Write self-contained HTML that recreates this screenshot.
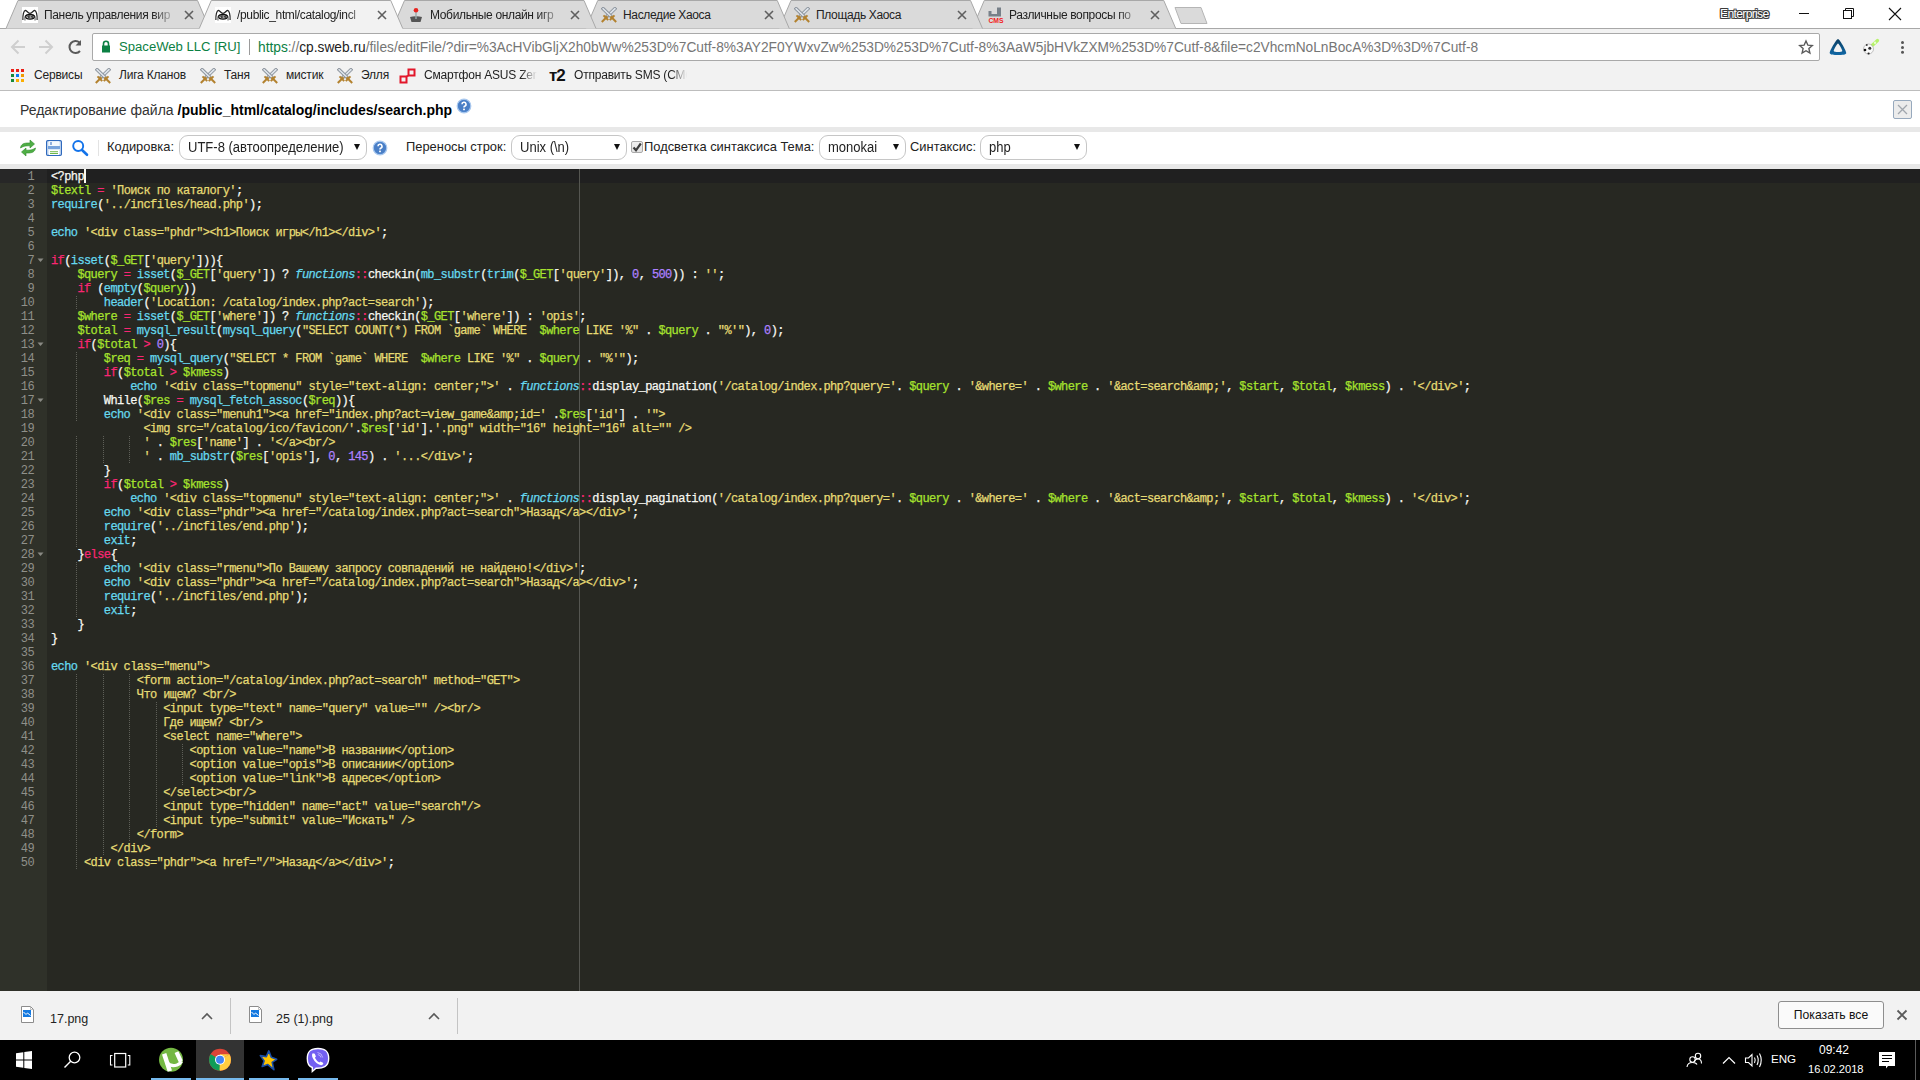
<!DOCTYPE html>
<html><head><meta charset="utf-8">
<style>
*{margin:0;padding:0;box-sizing:border-box}
html,body{width:1920px;height:1080px;overflow:hidden;background:#fff;font-family:"Liberation Sans",sans-serif}
.abs{position:absolute}
/* chrome */
#frame{position:absolute;left:0;top:0;width:1920px;height:28px;background:#fff}
.tabt{position:absolute;top:0;font-size:12px;letter-spacing:-0.35px;color:#222;white-space:nowrap;overflow:hidden}
#toolbar{position:absolute;left:0;top:29px;width:1920px;height:61px;background:#f2f2f2}
#bmline{position:absolute;left:0;top:90px;width:1920px;height:1px;background:#bdbdbd}
#omni{position:absolute;left:92px;top:33px;width:1728px;height:28px;background:#fff;border:1px solid #a9a9a9;border-radius:2px}
.url{position:absolute;top:39px;font-size:13.74px;white-space:nowrap}
.bm{position:absolute;top:68px;font-size:12px;letter-spacing:-0.2px;color:#222;white-space:nowrap}
/* page */
#page{position:absolute;left:0;top:91px;width:1920px;height:899px;background:#fff}
.band{position:absolute;left:0;width:1920px;background:#e8e8e8}
.lbl{position:absolute;font-size:12.9px;line-height:17px;color:#222;white-space:nowrap}
.sel{position:absolute;height:25px;border:1px solid #c6c6c6;border-radius:9px;background:#fff;font-size:13px;color:#222;padding-left:8px;line-height:23px;white-space:nowrap}
.st{display:inline-block;font-size:14px;transform:scaleX(0.93);transform-origin:0 50%}
.sel b{position:absolute;right:6px;top:8px;width:0;height:0;border-left:3px solid transparent;border-right:3px solid transparent;border-top:6px solid #111}
/* editor */
#editor{position:absolute;left:0;top:169px;width:1920px;height:822px;background:#272822;overflow:hidden}
#gutter{position:absolute;left:0;top:0;width:47px;height:822px;background:#2f3129}
#nums{position:absolute;left:0;top:1px;width:34px;text-align:right;font-family:"Liberation Mono",monospace;font-size:12px;letter-spacing:-0.6px;line-height:14px;color:#8f908a}
#code{position:absolute;left:51px;top:1px;-webkit-text-stroke:0.25px;font-family:"Liberation Mono",monospace;font-size:12px;letter-spacing:-0.6px;line-height:14px;color:#f8f8f2;white-space:pre}
.ln{height:14px}
i{font-style:normal}
i.v{color:#a6e22e}
i.k{color:#f92672}
i.s{color:#e6db74}
i.f{color:#66d9ef}
i.n{color:#ae81ff}
i.c{color:#66d9ef;font-style:italic}
#actline{position:absolute;left:47px;top:0;width:1873px;height:14px;background:#202020}
#actg{position:absolute;left:0;top:0;width:47px;height:14px;background:#272727}
.ig{position:absolute;width:1px;height:14px;background:repeating-linear-gradient(to bottom,transparent 0,transparent 1px,#5e5f58 1px,#5e5f58 2px)}
#margin{position:absolute;left:579px;top:0;width:1px;height:822px;background:#555651}
/* download bar */
#dl{position:absolute;left:0;top:991px;width:1920px;height:49px;background:#f2f2f2}
#taskbar{position:absolute;left:0;top:1040px;width:1920px;height:40px;background:#000}
</style></head><body>
<div id="frame"></div>
<svg width="0" height="0" style="position:absolute">
<defs>
<symbol id="sw" viewBox="0 0 16 16">
<g stroke-linecap="square">
<path d="M13.8 1.8 L5.8 9.6" stroke="#858d96" stroke-width="3.4"/>
<path d="M13.8 1.8 L5.8 9.6" stroke="#dde3ea" stroke-width="1.7"/>
<path d="M2.2 1.8 L10.2 9.6" stroke="#858d96" stroke-width="3.4"/>
<path d="M2.2 1.8 L10.2 9.6" stroke="#dde3ea" stroke-width="1.7"/>
</g>
<g stroke="#b3822f" stroke-width="2" stroke-linecap="butt">
<path d="M6.5 9.3 L0.8 15"/><path d="M2.5 8.4 L7.2 13.1"/>
<path d="M9.5 9.3 L15.2 15"/><path d="M13.5 8.4 L8.8 13.1"/>
</g>
</symbol>
<symbol id="spider" viewBox="0 0 16 16">
<rect x="0" y="0" width="16" height="16" fill="#fff"/>
<path d="M0.9 13 C0.6 8 1.8 3.5 3.3 3.3 C4.6 3.2 5.8 6.3 8 6.3 C10.2 6.3 11.4 3.2 12.7 3.3 C14.2 3.5 15.4 8 15.1 13" fill="none" stroke="#222" stroke-width="1.2"/>
<path d="M3 13.5 C2.6 10 3 8.3 4.3 8 M13 13.5 C13.4 10 13 8.3 11.7 8" fill="none" stroke="#555" stroke-width="1"/>
<ellipse cx="8" cy="9.8" rx="4.3" ry="2.3" fill="none" stroke="#111" stroke-width="1.3"/>
<path d="M8 8 L8 11.6 M5.3 9.8 L7.2 8.6 L7.2 11 Z M8.8 9.8 L10.7 8.6 L10.7 11 Z" fill="#555" stroke="#222" stroke-width="0.7"/>
</symbol>
</defs>
</svg>
<svg class="abs" style="left:0;top:0" width="1920" height="29">
<line x1="0" y1="28.5" x2="1920" y2="28.5" stroke="#a8a8a8" stroke-width="1"/>
<path d="M972.25 28.5 L984.25 0.5 L1163.75 0.5 L1175.75 28.5 Z" fill="#dadada"/>
<path d="M972.25 28.5 L984.25 0.5 L1163.75 0.5 L1175.75 28.5" fill="none" stroke="#a8a8a8" stroke-width="1"/>
<path d="M779.00 28.5 L791.00 0.5 L970.50 0.5 L982.50 28.5 Z" fill="#dadada"/>
<path d="M779.00 28.5 L791.00 0.5 L970.50 0.5 L982.50 28.5" fill="none" stroke="#a8a8a8" stroke-width="1"/>
<path d="M585.75 28.5 L597.75 0.5 L777.25 0.5 L789.25 28.5 Z" fill="#dadada"/>
<path d="M585.75 28.5 L597.75 0.5 L777.25 0.5 L789.25 28.5" fill="none" stroke="#a8a8a8" stroke-width="1"/>
<path d="M392.50 28.5 L404.50 0.5 L584.00 0.5 L596.00 28.5 Z" fill="#dadada"/>
<path d="M392.50 28.5 L404.50 0.5 L584.00 0.5 L596.00 28.5" fill="none" stroke="#a8a8a8" stroke-width="1"/>
<path d="M6.00 28.5 L18.00 0.5 L197.50 0.5 L209.50 28.5 Z" fill="#dadada"/>
<path d="M6.00 28.5 L18.00 0.5 L197.50 0.5 L209.50 28.5" fill="none" stroke="#a8a8a8" stroke-width="1"/>
<path d="M199.25 28.5 L211.25 0.5 L390.75 0.5 L402.75 28.5 Z" fill="#f2f2f2"/>
<path d="M199.25 28.5 L211.25 0.5 L390.75 0.5 L402.75 28.5" fill="none" stroke="#a8a8a8" stroke-width="1"/>
<rect x="199.75" y="28" width="202.50" height="1.5" fill="#f2f2f2"/>
<path d="M1175 7.5 L1201 7.5 L1207 23.5 L1181 23.5 Z" fill="#dadada" stroke="#b5b5b5" stroke-width="1" stroke-linejoin="round"/>
</svg>
<!-- favicons -->
<svg class="abs" style="left:22px;top:7px" width="16" height="16"><use href="#spider"/></svg>
<svg class="abs" style="left:215px;top:7px" width="16" height="16"><use href="#spider"/></svg>
<svg class="abs" style="left:408px;top:7px" width="16" height="16" viewBox="0 0 16 16">
<path d="M2 10 L14 10 L12.5 15 L3.5 15 Z" fill="#555"/><path d="M2 10 Q8 8 14 10" fill="#777"/>
<rect x="7.3" y="4" width="1.4" height="8" fill="#9aa"/><circle cx="8" cy="3.3" r="2.3" fill="#e8231f"/>
</svg>
<svg class="abs" style="left:601px;top:7px" width="16" height="16"><use href="#sw"/></svg>
<svg class="abs" style="left:794px;top:7px" width="16" height="16"><use href="#sw"/></svg>
<svg class="abs" style="left:988px;top:7px" width="16" height="16" viewBox="0 0 16 16">
<path d="M0.5 4 L3.5 4 L3.5 7 L9 7 L9 0.5 L13 0.5 L13 9.5 L0.5 9.5 Z" fill="#778089"/>
<text x="8" y="15.8" text-anchor="middle" font-family="Liberation Sans" font-weight="bold" font-size="6.8" fill="#f21d1d">CMS</text>
</svg>
<!-- tab titles -->
<div class="tabt" style="left:44px;top:8px;width:133px;-webkit-mask-image:linear-gradient(to right,#000 82%,transparent)">Панель управления вир</div>
<div class="tabt" style="left:237px;top:8px;width:133px;-webkit-mask-image:linear-gradient(to right,#000 82%,transparent)">/public_html/catalog/incl</div>
<div class="tabt" style="left:430px;top:8px;width:133px;-webkit-mask-image:linear-gradient(to right,#000 82%,transparent)">Мобильные онлайн игр</div>
<div class="tabt" style="left:623px;top:8px;width:135px">Наследие Хаоса</div>
<div class="tabt" style="left:816px;top:8px;width:135px">Площадь Хаоса</div>
<div class="tabt" style="left:1009px;top:8px;width:133px;-webkit-mask-image:linear-gradient(to right,#000 82%,transparent)">Различные вопросы по </div>
<!-- close x -->
<svg class="abs" style="left:0;top:0" width="1200" height="28">
<g stroke="#5f5f5f" stroke-width="1.6" stroke-linecap="butt">
<path d="M185 11 L193 19 M193 11 L185 19"/>
<path d="M378 11 L386 19 M386 11 L378 19"/>
<path d="M571 11 L579 19 M579 11 L571 19"/>
<path d="M765 11 L773 19 M773 11 L765 19"/>
<path d="M958 11 L966 19 M966 11 L958 19"/>
<path d="M1151 11 L1159 19 M1159 11 L1151 19"/>
</g></svg>
<!-- window controls -->
<div class="abs" style="left:1720px;top:7px;font-size:12.2px;line-height:14px;color:#fff;letter-spacing:-0.7px;text-shadow:1px 0 0 #3a3a3a,-1px 0 0 #3a3a3a,0 1px 0 #3a3a3a,0 -1px 0 #3a3a3a,1px 1px 0 #555,-1px -1px 0 #555,1px -1px 0 #555,-1px 1px 0 #555">Enterprise</div>
<svg class="abs" style="left:1780px;top:0" width="140" height="28">
<path d="M19 13.5 L29 13.5" stroke="#111" stroke-width="1"/>
<rect x="63.5" y="10.5" width="8" height="8" fill="none" stroke="#111" stroke-width="1"/>
<path d="M65.5 10.5 L65.5 8.5 L73.5 8.5 L73.5 16.5 L71.5 16.5" fill="none" stroke="#111" stroke-width="1"/>
<path d="M109 8 L121 20 M121 8 L109 20" stroke="#111" stroke-width="1.1"/>
</svg>
<!-- toolbar -->
<div id="toolbar"></div>
<svg class="abs" style="left:0;top:29px" width="92" height="33">
<g fill="none" stroke="#cfcfcf" stroke-width="2">
<path d="M12 18 L25 18 M18.5 11.5 L12 18 L18.5 24.5"/>
<path d="M39 18 L52 18 M45.5 11.5 L52 18 L45.5 24.5"/>
</g>
<path d="M80 22 A6 6 0 1 1 79.5 13.5" fill="none" stroke="#5a5a5a" stroke-width="2"/>
<path d="M81 11 L81 16.5 L75.5 16.5 Z" fill="#5a5a5a"/>
</svg>
<div id="omni"></div>
<svg class="abs" style="left:101px;top:40px" width="10" height="13" viewBox="0 0 10 13">
<path d="M2.5 6 L2.5 3.8 A2.5 2.5 0 0 1 7.5 3.8 L7.5 6" fill="none" stroke="#0b8043" stroke-width="1.6"/>
<rect x="1" y="5.5" width="8" height="7" fill="#0b8043"/>
</svg>
<div class="url" style="left:119px;color:#0b8043;font-size:13.12px">SpaceWeb LLC [RU]</div>
<div class="abs" style="left:249px;top:39px;width:1px;height:16px;background:#9b9b9b"></div>
<div class="url" id="urltxt" style="left:258px;top:40px;color:#767676"><span style="color:#0b8043">https</span>://<span style="color:#222">cp.sweb.ru</span>/files/editFile/?dir=%3AcHVibGljX2h0bWw%253D%7Cutf-8%3AY2F0YWxvZw%253D%253D%7Cutf-8%3AaW5jbHVkZXM%253D%7Cutf-8&amp;file=c2VhcmNoLnBocA%3D%3D%7Cutf-8</div>
<svg class="abs" style="left:1798px;top:39px" width="16" height="16" viewBox="0 0 16 16">
<path d="M8 2 L9.9 6.2 L14.3 6.6 L10.9 9.6 L11.9 14 L8 11.7 L4.1 14 L5.1 9.6 L1.7 6.6 L6.1 6.2 Z" fill="none" stroke="#5a5a5a" stroke-width="1.4" stroke-linejoin="miter"/>
</svg>
<svg class="abs" style="left:1829px;top:38px" width="18" height="18" viewBox="0 0 18 18">
<defs><linearGradient id="tg" x1="0" y1="0" x2="0" y2="1"><stop offset="0" stop-color="#0b3f63"/><stop offset="1" stop-color="#1068a6"/></linearGradient></defs>
<path fill-rule="evenodd" fill="url(#tg)" d="M9 1 C10.5 1 17.3 12.5 17.3 15 C17.3 16.7 13 17 9 17 C5 17 0.7 16.7 0.7 15 C0.7 12.5 7.5 1 9 1 Z M9 5.5 C9.8 5.5 13.3 11.8 13.3 13 C13.3 13.8 11 14 9 14 C7 14 4.7 13.8 4.7 13 C4.7 11.8 8.2 5.5 9 5.5 Z"/>
</svg>
<svg class="abs" style="left:1860px;top:38px" width="20" height="18" viewBox="0 0 20 18">
<path d="M10.5 9 L17.5 2.5" stroke="#b6f26a" stroke-width="3.2" stroke-linecap="round"/>
<circle cx="15" cy="4.8" r="1.2" fill="#e8ffd0"/>
<circle cx="8.5" cy="11" r="5" fill="#fafafa" stroke="#9a9a9a" stroke-width="0.6"/>
<circle cx="9.8" cy="10.2" r="1.5" fill="#333"/><circle cx="5" cy="12" r="1.3" fill="#111"/><circle cx="8.6" cy="15.5" r="1.1" fill="#222"/><circle cx="6.8" cy="7" r="0.9" fill="#333"/>
</svg>
<svg class="abs" style="left:1898px;top:39px" width="8" height="16">
<circle cx="4.5" cy="3.5" r="1.5" fill="#555"/><circle cx="4.5" cy="8.5" r="1.5" fill="#555"/><circle cx="4.5" cy="13.3" r="1.5" fill="#555"/>
</svg>
<!-- bookmarks -->
<svg class="abs" style="left:11px;top:69px" width="14" height="14">
<rect x="0" y="0" width="3" height="3" fill="#ea1f17"/><rect x="5" y="0" width="3" height="3" fill="#ea1f17"/><rect x="10" y="0" width="3" height="3" fill="#ea1f17"/>
<rect x="0" y="5" width="3" height="3" fill="#178a3a"/><rect x="5" y="5" width="3" height="3" fill="#0a7cf5"/><rect x="10" y="5" width="3" height="3" fill="#ef9a00"/>
<rect x="0" y="10" width="3" height="3" fill="#178a3a"/><rect x="5" y="10" width="3" height="3" fill="#fbae00"/><rect x="10" y="10" width="3" height="3" fill="#fbae00"/>
</svg>
<div class="bm" style="left:34px">Сервисы</div>
<svg class="abs" style="left:95px;top:68px" width="16" height="16"><use href="#sw"/></svg>
<div class="bm" style="left:119px">Лига Кланов</div>
<svg class="abs" style="left:200px;top:68px" width="16" height="16"><use href="#sw"/></svg>
<div class="bm" style="left:224px">Таня</div>
<svg class="abs" style="left:262px;top:68px" width="16" height="16"><use href="#sw"/></svg>
<div class="bm" style="left:286px">мистик</div>
<svg class="abs" style="left:337px;top:68px" width="16" height="16"><use href="#sw"/></svg>
<div class="bm" style="left:361px">Элля</div>
<svg class="abs" style="left:399px;top:68px" width="17" height="17" viewBox="0 0 17 17">
<rect x="1.5" y="8.5" width="6" height="6" fill="none" stroke="#e2162a" stroke-width="2"/>
<rect x="9.5" y="1.5" width="6" height="6" fill="none" stroke="#e2162a" stroke-width="2"/>
<path d="M7.5 8.5 L9.5 7.5" stroke="#e2162a" stroke-width="1.5"/>
</svg>
<div class="bm" style="left:424px;width:113px;overflow:hidden;-webkit-mask-image:linear-gradient(to right,#000 86%,transparent)">Смартфон ASUS ZenFone</div>
<div class="abs" style="left:549px;top:66px;font-size:17px;font-weight:bold;color:#111;letter-spacing:-1px">т2</div>
<div class="bm" style="left:574px;width:113px;overflow:hidden;-webkit-mask-image:linear-gradient(to right,#000 86%,transparent)">Отправить SMS (СМС)</div>
<div id="bmline"></div>

<div id="page">
  <div class="abs" style="left:20px;top:11px;font-size:14px;line-height:16px;color:#333;white-space:nowrap">Редактирование файла <b style="color:#000">/public_html/catalog/includes/search.php</b></div>
  <svg class="abs" style="left:456px;top:7px" width="16" height="16" viewBox="0 0 16 16">
    <circle cx="8" cy="8" r="6.8" fill="#4f86cf" stroke="#a9c8ee" stroke-width="1.2"/>
    <circle cx="8" cy="8" r="5.6" fill="#4a7fc6"/>
    <path d="M6 6.3 A2 2 0 1 1 8.6 8.2 Q8 8.6 8 9.6" fill="none" stroke="#fff" stroke-width="1.6"/>
    <rect x="7.1" y="10.6" width="1.8" height="1.6" fill="#fff"/>
  </svg>
  <div class="abs" style="left:1893px;top:9px;width:19px;height:19px;border:1px solid #97a9bd;border-radius:2px;background:#ececec"></div>
  <svg class="abs" style="left:1893px;top:9px" width="19" height="19"><path d="M5 5 L14 14 M14 5 L5 14" stroke="#a0a6ad" stroke-width="1.3"/></svg>
  <div class="band" style="top:36px;height:5px"></div>
  <!-- toolbar icons -->
  <svg class="abs" style="left:19px;top:48px" width="18" height="18" viewBox="0 0 18 18">
    <path d="M1.5 9 C2 5 5 4 9 4 L11 4 L11 1 L15.5 5 L11 9 L11 6.8 L9 6.8 C6 6.8 4 7.5 1.5 9 Z" fill="#4fae45" stroke="#2e8b2a" stroke-width="0.6"/>
    <path d="M16.5 9 C16 13 13 14 9 14 L7 14 L7 17 L2.5 13 L7 9 L7 11.2 L9 11.2 C12 11.2 14 10.5 16.5 9 Z" fill="#4fae45" stroke="#2e8b2a" stroke-width="0.6"/>
  </svg>
  <svg class="abs" style="left:46px;top:49px" width="16" height="16" viewBox="0 0 16 16">
    <rect x="0.6" y="0.6" width="14.8" height="14.8" rx="1.2" fill="#dbe8f7" stroke="#2f69bd" stroke-width="1.2"/>
    <rect x="2" y="6" width="12" height="3" fill="#78a3dc"/>
    <rect x="2.8" y="1.2" width="10.4" height="4.8" fill="#f4f8fd"/>
    <rect x="4.5" y="2" width="1" height="3" fill="#2f69bd"/>
    <rect x="3" y="10" width="10" height="5" fill="#fff"/>
    <rect x="4" y="11.2" width="8" height="1" fill="#6fb84a"/>
    <rect x="4" y="13" width="8" height="1" fill="#6fb84a"/>
  </svg>
  <svg class="abs" style="left:72px;top:49px" width="17" height="17" viewBox="0 0 17 17">
    <circle cx="6.2" cy="6" r="5" fill="none" stroke="#1373ea" stroke-width="1.9"/>
    <path d="M10 10 L15 14.8" stroke="#1373ea" stroke-width="2.6" stroke-linecap="round"/>
  </svg>
  <div class="abs" style="left:98px;top:49px;width:1px;height:16px;background:#e3e3e3"></div>
  <div class="lbl" style="left:107px;top:47px">Кодировка:</div>
  <div class="sel" style="left:179px;top:44px;width:188px"><span class="st">UTF-8 (автоопределение)</span><b></b></div>
  <svg class="abs" style="left:372px;top:49px" width="16" height="16" viewBox="0 0 16 16">
    <circle cx="8" cy="8" r="6.8" fill="#4f86cf" stroke="#a9c8ee" stroke-width="1.2"/>
    <circle cx="8" cy="8" r="5.6" fill="#4a7fc6"/>
    <path d="M6 6.3 A2 2 0 1 1 8.6 8.2 Q8 8.6 8 9.6" fill="none" stroke="#fff" stroke-width="1.6"/>
    <rect x="7.1" y="10.6" width="1.8" height="1.6" fill="#fff"/>
  </svg>
  <div class="lbl" style="left:406px;top:47px">Переносы строк:</div>
  <div class="sel" style="left:511px;top:44px;width:116px"><span class="st">Unix (\n)</span><b></b></div>
  <div class="abs" style="left:631px;top:50px;width:12px;height:12px;border:1px solid #a9a9a9;border-radius:2px;background:linear-gradient(#f0f0f0,#e2e2e2)"></div>
  <svg class="abs" style="left:631px;top:50px" width="12" height="12"><path d="M2.5 6.5 L5 9.3 L9.8 2.5" fill="none" stroke="#3d3d3d" stroke-width="2.2" stroke-linejoin="miter"/></svg>
  <div class="lbl" style="left:644px;top:47px">Подсветка синтаксиса Тема:</div>
  <div class="sel" style="left:819px;top:44px;width:87px"><span class="st">monokai</span><b></b></div>
  <div class="lbl" style="left:910px;top:47px">Синтаксис:</div>
  <div class="sel" style="left:980px;top:44px;width:107px"><span class="st">php</span><b></b></div>
  <div class="band" style="top:73px;height:5px"></div>
</div>

<div id="editor">
  <div id="gutter"><div id="actg"></div><div id="nums"><div class="ln">1</div><div class="ln">2</div><div class="ln">3</div><div class="ln">4</div><div class="ln">5</div><div class="ln">6</div><div class="ln">7</div><div class="ln">8</div><div class="ln">9</div><div class="ln">10</div><div class="ln">11</div><div class="ln">12</div><div class="ln">13</div><div class="ln">14</div><div class="ln">15</div><div class="ln">16</div><div class="ln">17</div><div class="ln">18</div><div class="ln">19</div><div class="ln">20</div><div class="ln">21</div><div class="ln">22</div><div class="ln">23</div><div class="ln">24</div><div class="ln">25</div><div class="ln">26</div><div class="ln">27</div><div class="ln">28</div><div class="ln">29</div><div class="ln">30</div><div class="ln">31</div><div class="ln">32</div><div class="ln">33</div><div class="ln">34</div><div class="ln">35</div><div class="ln">36</div><div class="ln">37</div><div class="ln">38</div><div class="ln">39</div><div class="ln">40</div><div class="ln">41</div><div class="ln">42</div><div class="ln">43</div><div class="ln">44</div><div class="ln">45</div><div class="ln">46</div><div class="ln">47</div><div class="ln">48</div><div class="ln">49</div><div class="ln">50</div></div></div>
  <div id="actline"></div>
  <div id="margin"></div>
  <div class="ig" style="left:76px;top:126px"></div>
<div class="ig" style="left:76px;top:182px"></div>
<div class="ig" style="left:76px;top:196px"></div>
<div class="ig" style="left:76px;top:210px"></div>
<div class="ig" style="left:76px;top:224px"></div>
<div class="ig" style="left:76px;top:238px"></div>
<div class="ig" style="left:76px;top:266px"></div>
<div class="ig" style="left:103px;top:266px"></div>
<div class="ig" style="left:129px;top:266px"></div>
<div class="ig" style="left:76px;top:280px"></div>
<div class="ig" style="left:103px;top:280px"></div>
<div class="ig" style="left:129px;top:280px"></div>
<div class="ig" style="left:76px;top:294px"></div>
<div class="ig" style="left:76px;top:308px"></div>
<div class="ig" style="left:76px;top:322px"></div>
<div class="ig" style="left:76px;top:336px"></div>
<div class="ig" style="left:76px;top:350px"></div>
<div class="ig" style="left:76px;top:364px"></div>
<div class="ig" style="left:76px;top:392px"></div>
<div class="ig" style="left:76px;top:406px"></div>
<div class="ig" style="left:76px;top:420px"></div>
<div class="ig" style="left:76px;top:434px"></div>
<div class="ig" style="left:76px;top:504px"></div>
<div class="ig" style="left:103px;top:504px"></div>
<div class="ig" style="left:129px;top:504px"></div>
<div class="ig" style="left:76px;top:518px"></div>
<div class="ig" style="left:103px;top:518px"></div>
<div class="ig" style="left:129px;top:518px"></div>
<div class="ig" style="left:76px;top:532px"></div>
<div class="ig" style="left:103px;top:532px"></div>
<div class="ig" style="left:129px;top:532px"></div>
<div class="ig" style="left:156px;top:532px"></div>
<div class="ig" style="left:76px;top:546px"></div>
<div class="ig" style="left:103px;top:546px"></div>
<div class="ig" style="left:129px;top:546px"></div>
<div class="ig" style="left:156px;top:546px"></div>
<div class="ig" style="left:76px;top:560px"></div>
<div class="ig" style="left:103px;top:560px"></div>
<div class="ig" style="left:129px;top:560px"></div>
<div class="ig" style="left:156px;top:560px"></div>
<div class="ig" style="left:76px;top:574px"></div>
<div class="ig" style="left:103px;top:574px"></div>
<div class="ig" style="left:129px;top:574px"></div>
<div class="ig" style="left:156px;top:574px"></div>
<div class="ig" style="left:182px;top:574px"></div>
<div class="ig" style="left:76px;top:588px"></div>
<div class="ig" style="left:103px;top:588px"></div>
<div class="ig" style="left:129px;top:588px"></div>
<div class="ig" style="left:156px;top:588px"></div>
<div class="ig" style="left:182px;top:588px"></div>
<div class="ig" style="left:76px;top:602px"></div>
<div class="ig" style="left:103px;top:602px"></div>
<div class="ig" style="left:129px;top:602px"></div>
<div class="ig" style="left:156px;top:602px"></div>
<div class="ig" style="left:182px;top:602px"></div>
<div class="ig" style="left:76px;top:616px"></div>
<div class="ig" style="left:103px;top:616px"></div>
<div class="ig" style="left:129px;top:616px"></div>
<div class="ig" style="left:156px;top:616px"></div>
<div class="ig" style="left:76px;top:630px"></div>
<div class="ig" style="left:103px;top:630px"></div>
<div class="ig" style="left:129px;top:630px"></div>
<div class="ig" style="left:156px;top:630px"></div>
<div class="ig" style="left:76px;top:644px"></div>
<div class="ig" style="left:103px;top:644px"></div>
<div class="ig" style="left:129px;top:644px"></div>
<div class="ig" style="left:156px;top:644px"></div>
<div class="ig" style="left:76px;top:658px"></div>
<div class="ig" style="left:103px;top:658px"></div>
<div class="ig" style="left:129px;top:658px"></div>
<div class="ig" style="left:76px;top:672px"></div>
<div class="ig" style="left:103px;top:672px"></div>
<div class="ig" style="left:76px;top:686px"></div>
<svg class="abs" style="left:37px;top:89px" width="7" height="5"><path d="M0.5 0.5 L6.5 0.5 L3.5 4 Z" fill="#8a8a84"/></svg>
<svg class="abs" style="left:37px;top:173px" width="7" height="5"><path d="M0.5 0.5 L6.5 0.5 L3.5 4 Z" fill="#8a8a84"/></svg>
<svg class="abs" style="left:37px;top:229px" width="7" height="5"><path d="M0.5 0.5 L6.5 0.5 L3.5 4 Z" fill="#8a8a84"/></svg>
<svg class="abs" style="left:37px;top:383px" width="7" height="5"><path d="M0.5 0.5 L6.5 0.5 L3.5 4 Z" fill="#8a8a84"/></svg>
<div class="abs" style="left:84px;top:0;width:2px;height:14px;background:#f8f8f0"></div>
  <div id="code"><div class="ln">&lt;?php</div><div class="ln"><i class="v">$textl</i> <i class="k">=</i> <i class="s">'Поиск по каталогу'</i>;</div><div class="ln"><i class="f">require</i>(<i class="s">'../incfiles/head.php'</i>);</div><div class="ln"></div><div class="ln"><i class="f">echo</i> <i class="s">'&lt;div class="phdr"&gt;&lt;h1&gt;Поиск игры&lt;/h1&gt;&lt;/div&gt;'</i>;</div><div class="ln"></div><div class="ln"><i class="k">if</i>(<i class="f">isset</i>(<i class="v">$_GET</i>[<i class="s">'query'</i>])){</div><div class="ln">    <i class="v">$query</i> <i class="k">=</i> <i class="f">isset</i>(<i class="v">$_GET</i>[<i class="s">'query'</i>]) ? <i class="c">functions</i><i class="k">::</i>checkin(<i class="f">mb_substr</i>(<i class="f">trim</i>(<i class="v">$_GET</i>[<i class="s">'query'</i>]), <i class="n">0</i>, <i class="n">500</i>)) : <i class="s">''</i>;</div><div class="ln">    <i class="k">if</i> (<i class="f">empty</i>(<i class="v">$query</i>))</div><div class="ln">        <i class="f">header</i>(<i class="s">'Location: /catalog/index.php?act=search'</i>);</div><div class="ln">    <i class="v">$where</i> <i class="k">=</i> <i class="f">isset</i>(<i class="v">$_GET</i>[<i class="s">'where'</i>]) ? <i class="c">functions</i><i class="k">::</i>checkin(<i class="v">$_GET</i>[<i class="s">'where'</i>]) : <i class="s">'opis'</i>;</div><div class="ln">    <i class="v">$total</i> <i class="k">=</i> <i class="f">mysql_result</i>(<i class="f">mysql_query</i>(<i class="s">"SELECT COUNT(*) FROM `game` WHERE  </i><i class="v">$where</i><i class="s"> LIKE '%"</i> . <i class="v">$query</i> . <i class="s">"%'"</i>), <i class="n">0</i>);</div><div class="ln">    <i class="k">if</i>(<i class="v">$total</i> <i class="k">&gt;</i> <i class="n">0</i>){</div><div class="ln">        <i class="v">$req</i> <i class="k">=</i> <i class="f">mysql_query</i>(<i class="s">"SELECT * FROM `game` WHERE  </i><i class="v">$where</i><i class="s"> LIKE '%"</i> . <i class="v">$query</i> . <i class="s">"%'"</i>);</div><div class="ln">        <i class="k">if</i>(<i class="v">$total</i> <i class="k">&gt;</i> <i class="v">$kmess</i>)</div><div class="ln">            <i class="f">echo</i> <i class="s">'&lt;div class="topmenu" style="text-align: center;"&gt;'</i> . <i class="c">functions</i><i class="k">::</i>display_pagination(<i class="s">'/catalog/index.php?query='</i>. <i class="v">$query</i> . <i class="s">'&amp;where='</i> . <i class="v">$where</i> . <i class="s">'&amp;act=search&amp;amp;'</i>, <i class="v">$start</i>, <i class="v">$total</i>, <i class="v">$kmess</i>) . <i class="s">'&lt;/div&gt;'</i>;</div><div class="ln">        While(<i class="v">$res</i> <i class="k">=</i> <i class="f">mysql_fetch_assoc</i>(<i class="v">$req</i>)){</div><div class="ln">        <i class="f">echo</i> <i class="s">'&lt;div class="menuh1"&gt;&lt;a href="index.php?act=view_game&amp;amp;id='</i> .<i class="v">$res</i>[<i class="s">'id'</i>] . <i class="s">'"&gt;</i></div><div class="ln"><i class="s">              &lt;img src="/catalog/ico/favicon/'</i>.<i class="v">$res</i>[<i class="s">'id'</i>].<i class="s">'.png" width="16" height="16" alt="" /&gt;</i></div><div class="ln"><i class="s">              '</i> . <i class="v">$res</i>[<i class="s">'name'</i>] . <i class="s">'&lt;/a&gt;&lt;br/&gt;</i></div><div class="ln"><i class="s">              '</i> . <i class="f">mb_substr</i>(<i class="v">$res</i>[<i class="s">'opis'</i>], <i class="n">0</i>, <i class="n">145</i>) . <i class="s">'...&lt;/div&gt;'</i>;</div><div class="ln">        }</div><div class="ln">        <i class="k">if</i>(<i class="v">$total</i> <i class="k">&gt;</i> <i class="v">$kmess</i>)</div><div class="ln">            <i class="f">echo</i> <i class="s">'&lt;div class="topmenu" style="text-align: center;"&gt;'</i> . <i class="c">functions</i><i class="k">::</i>display_pagination(<i class="s">'/catalog/index.php?query='</i>. <i class="v">$query</i> . <i class="s">'&amp;where='</i> . <i class="v">$where</i> . <i class="s">'&amp;act=search&amp;amp;'</i>, <i class="v">$start</i>, <i class="v">$total</i>, <i class="v">$kmess</i>) . <i class="s">'&lt;/div&gt;'</i>;</div><div class="ln">        <i class="f">echo</i> <i class="s">'&lt;div class="phdr"&gt;&lt;a href="/catalog/index.php?act=search"&gt;Назад&lt;/a&gt;&lt;/div&gt;'</i>;</div><div class="ln">        <i class="f">require</i>(<i class="s">'../incfiles/end.php'</i>);</div><div class="ln">        <i class="f">exit</i>;</div><div class="ln">    }<i class="k">else</i>{</div><div class="ln">        <i class="f">echo</i> <i class="s">'&lt;div class="rmenu"&gt;По Вашему запросу совпадений не найдено!&lt;/div&gt;'</i>;</div><div class="ln">        <i class="f">echo</i> <i class="s">'&lt;div class="phdr"&gt;&lt;a href="/catalog/index.php?act=search"&gt;Назад&lt;/a&gt;&lt;/div&gt;'</i>;</div><div class="ln">        <i class="f">require</i>(<i class="s">'../incfiles/end.php'</i>);</div><div class="ln">        <i class="f">exit</i>;</div><div class="ln">    }</div><div class="ln">}</div><div class="ln"></div><div class="ln"><i class="f">echo</i> <i class="s">'&lt;div class="menu"&gt;</i></div><div class="ln"><i class="s">             &lt;form action="/catalog/index.php?act=search" method="GET"&gt;</i></div><div class="ln"><i class="s">             Что ищем? &lt;br/&gt;</i></div><div class="ln"><i class="s">                 &lt;input type="text" name="query" value="" /&gt;&lt;br/&gt;</i></div><div class="ln"><i class="s">                 Где ищем? &lt;br/&gt;</i></div><div class="ln"><i class="s">                 &lt;select name="where"&gt;</i></div><div class="ln"><i class="s">                     &lt;option value="name"&gt;В названии&lt;/option&gt;</i></div><div class="ln"><i class="s">                     &lt;option value="opis"&gt;В описании&lt;/option&gt;</i></div><div class="ln"><i class="s">                     &lt;option value="link"&gt;В адресе&lt;/option&gt;</i></div><div class="ln"><i class="s">                 &lt;/select&gt;&lt;br/&gt;</i></div><div class="ln"><i class="s">                 &lt;input type="hidden" name="act" value="search"/&gt;</i></div><div class="ln"><i class="s">                 &lt;input type="submit" value="Искать" /&gt;</i></div><div class="ln"><i class="s">             &lt;/form&gt;</i></div><div class="ln"><i class="s">         &lt;/div&gt;</i></div><div class="ln"><i class="s">     &lt;div class="phdr"&gt;&lt;a href="/"&gt;Назад&lt;/a&gt;&lt;/div&gt;'</i>;</div></div>
</div>
<div id="dl"></div>
<svg width="0" height="0" style="position:absolute"><defs>
<symbol id="fimg" viewBox="0 0 13 17">
<path d="M0.5 0.5 L9.5 0.5 L12.5 3.5 L12.5 16.5 L0.5 16.5 Z" fill="#fff" stroke="#8c8c8c" stroke-width="1"/>
<path d="M9.5 0.5 L9.5 3.5 L12.5 3.5" fill="none" stroke="#b0b0b0" stroke-width="0.8"/>
<rect x="2" y="4" width="8" height="7" fill="#1479e0"/>
<path d="M2.5 6 L5 8.5 L6.5 7 L9.5 9.5" fill="none" stroke="#fff" stroke-width="1"/>
</symbol></defs></svg>
<svg class="abs" style="left:21px;top:1006px" width="13" height="17"><use href="#fimg"/></svg>
<div class="abs" style="left:50px;top:1012px;font-size:12.5px;line-height:15px;color:#222">17.png</div>
<svg class="abs" style="left:200px;top:1011px" width="14" height="10"><path d="M2 8 L7 3 L12 8" fill="none" stroke="#5a5a5a" stroke-width="1.6"/></svg>
<div class="abs" style="left:230px;top:998px;width:1px;height:36px;background:#c4c4c4"></div>
<svg class="abs" style="left:249px;top:1006px" width="13" height="17"><use href="#fimg"/></svg>
<div class="abs" style="left:276px;top:1012px;font-size:12.5px;line-height:15px;color:#222">25 (1).png</div>
<svg class="abs" style="left:427px;top:1011px" width="14" height="10"><path d="M2 8 L7 3 L12 8" fill="none" stroke="#5a5a5a" stroke-width="1.6"/></svg>
<div class="abs" style="left:457px;top:998px;width:1px;height:36px;background:#c4c4c4"></div>
<div class="abs" style="left:1778px;top:1001px;width:106px;height:28px;border:1px solid #8e8e8e;border-radius:3px;background:#fafafa;font-size:12.2px;line-height:26px;text-align:center;color:#111">Показать все</div>
<svg class="abs" style="left:1895px;top:1008px" width="14" height="14"><path d="M2.5 2.5 L11.5 11.5 M11.5 2.5 L2.5 11.5" stroke="#5a5a5a" stroke-width="1.8"/></svg>
<div id="taskbar"></div>
<svg class="abs" style="left:0;top:1040px" width="360" height="40">
<path d="M16 13.2 L23.3 12.2 L23.3 19.5 L16 19.5 Z M24.3 12 L32 11 L32 19.5 L24.3 19.5 Z M16 20.5 L23.3 20.5 L23.3 27.8 L16 26.8 Z M24.3 20.5 L32 20.5 L32 29 L24.3 28 Z" fill="#fff"/>
<circle cx="74.5" cy="17.5" r="5.3" fill="none" stroke="#fff" stroke-width="1.3"/>
<path d="M70.7 21.3 L64.5 27.5" stroke="#fff" stroke-width="1.4"/>
<rect x="114.7" y="13.5" width="11" height="13.5" fill="none" stroke="#fff" stroke-width="1.2"/>
<path d="M112.5 15.5 L110.5 15.5 L110.5 25 L112.5 25 M127.8 15.5 L129.8 15.5 L129.8 25 L127.8 25" fill="none" stroke="#fff" stroke-width="1.1"/>
<rect x="196" y="0" width="48" height="40" fill="#333"/>
<rect x="151" y="38" width="40" height="2" fill="#76b9ed"/>
<rect x="196" y="38" width="48" height="2" fill="#76b9ed"/>
<rect x="249" y="38" width="40" height="2" fill="#76b9ed"/>
<rect x="298" y="38" width="40" height="2" fill="#76b9ed"/>
<circle cx="171" cy="19.8" r="12" fill="#74b843"/>
<path d="M162 14.5 L166.3 13 L172 30.5 L167.7 31.8 Z" fill="#fff"/>
<path d="M176.5 12.2 L180.8 21.5" stroke="#fff" stroke-width="4.2"/>
<path d="M166.5 22.5 Q171 27 177 25 Q180.2 23.8 181.5 21.2" fill="none" stroke="#fff" stroke-width="3.2"/>
<g transform="translate(220 19.7)">
<circle r="11" fill="#db4437"/>
<path d="M0 0 L-9.5 -5.5 A11 11 0 0 0 0 11 Z" fill="#0f9d58"/>
<path d="M0 0 L0 11 A11 11 0 0 0 9.5 -5.5 Z" fill="#ffcd40"/>
<path d="M-9.5 -5.5 L-4.4 3 L0 0 Z" fill="#0f9d58"/>
<path d="M9.5 -5.5 L0 -5.5 L0 0 Z" fill="#ffcd40"/>
<path d="M-0.5 11 L4.7 2.5 L0 0 Z" fill="#ffcd40"/>
<circle r="5" fill="#fff"/><circle r="4" fill="#4285f4"/>
</g>
<path d="M268.8 10.9 L271.3 17.2 L276.7 19.3 L272.2 22.3 L273.9 29.7 L267.8 24.6 L262.2 26.4 L264.1 20.9 L260.3 15.6 L266.3 16.6 Z" fill="#ffc400" stroke="#1a4fa8" stroke-width="1.6" stroke-linejoin="round"/>
<path d="M318 8.5 C311.5 8.5 307.3 10.5 307.3 18.5 C307.3 24 309 26.5 312.3 27.5 L312.3 31.5 L316 28.3 C322.5 28.5 328.7 27 328.7 18.5 C328.7 10.5 324.5 8.5 318 8.5 Z" fill="#7360f2" stroke="#fff" stroke-width="1.4"/>
<path d="M312.8 13.2 Q311.3 14.5 312.7 18 Q315.5 23.5 320.3 25 Q322.3 25.5 323.3 24 L323 22.8 L320.5 21.5 L319.3 22.4 Q316.5 21 314.9 17.8 L315.9 16.5 L314.8 13.8 Z" fill="#fff"/>
<path d="M317.5 12.5 Q322 13 322.7 17.5 M317.8 14.5 Q320.5 15 321 17.5" fill="none" stroke="#d8d0ff" stroke-width="0.7"/>
</svg>
<svg class="abs" style="left:1680px;top:1040px" width="240" height="40">
<g fill="none" stroke="#fff" stroke-width="1.1">
<circle cx="12.5" cy="19.5" r="2.7"/><path d="M7 27 Q7.5 22.5 12.5 22.5 Q16 22.5 17 24.5"/>
<circle cx="18" cy="16" r="2.7"/><path d="M14.5 21 Q15.5 19 18 19 Q21.5 19 21.5 23.5"/>
<path d="M43 23.5 L49 17.5 L55 23.5" stroke-width="1.2"/>
<path d="M65.5 18 L68.5 18 L72 14.5 L72 26 L68.5 22.5 L65.5 22.5 Z"/>
<path d="M74.5 17.5 Q76 20.2 74.5 23 M77 15.5 Q79.5 20.2 77 25 M79.5 13.5 Q83 20.2 79.5 27"/>
</g>
<rect x="235" y="0" width="1" height="40" fill="#5a5a5a"/>
<path d="M199 12 L215 12 L215 26 L208 26 L206 28.5 L206 26 L199 26 Z" fill="#fff"/>
<path d="M202 15.5 L212 15.5 M202 18.5 L212 18.5 M202 21.5 L209 21.5" stroke="#000" stroke-width="1"/>
</svg>
<div class="abs" style="left:1771px;top:1052px;font-size:11.6px;line-height:14px;color:#fff">ENG</div>
<div class="abs" style="left:1819px;top:1043px;font-size:12px;line-height:14px;color:#fff">09:42</div>
<div class="abs" style="left:1808px;top:1062px;font-size:11.1px;line-height:14px;color:#fff">16.02.2018</div>

</body></html>
